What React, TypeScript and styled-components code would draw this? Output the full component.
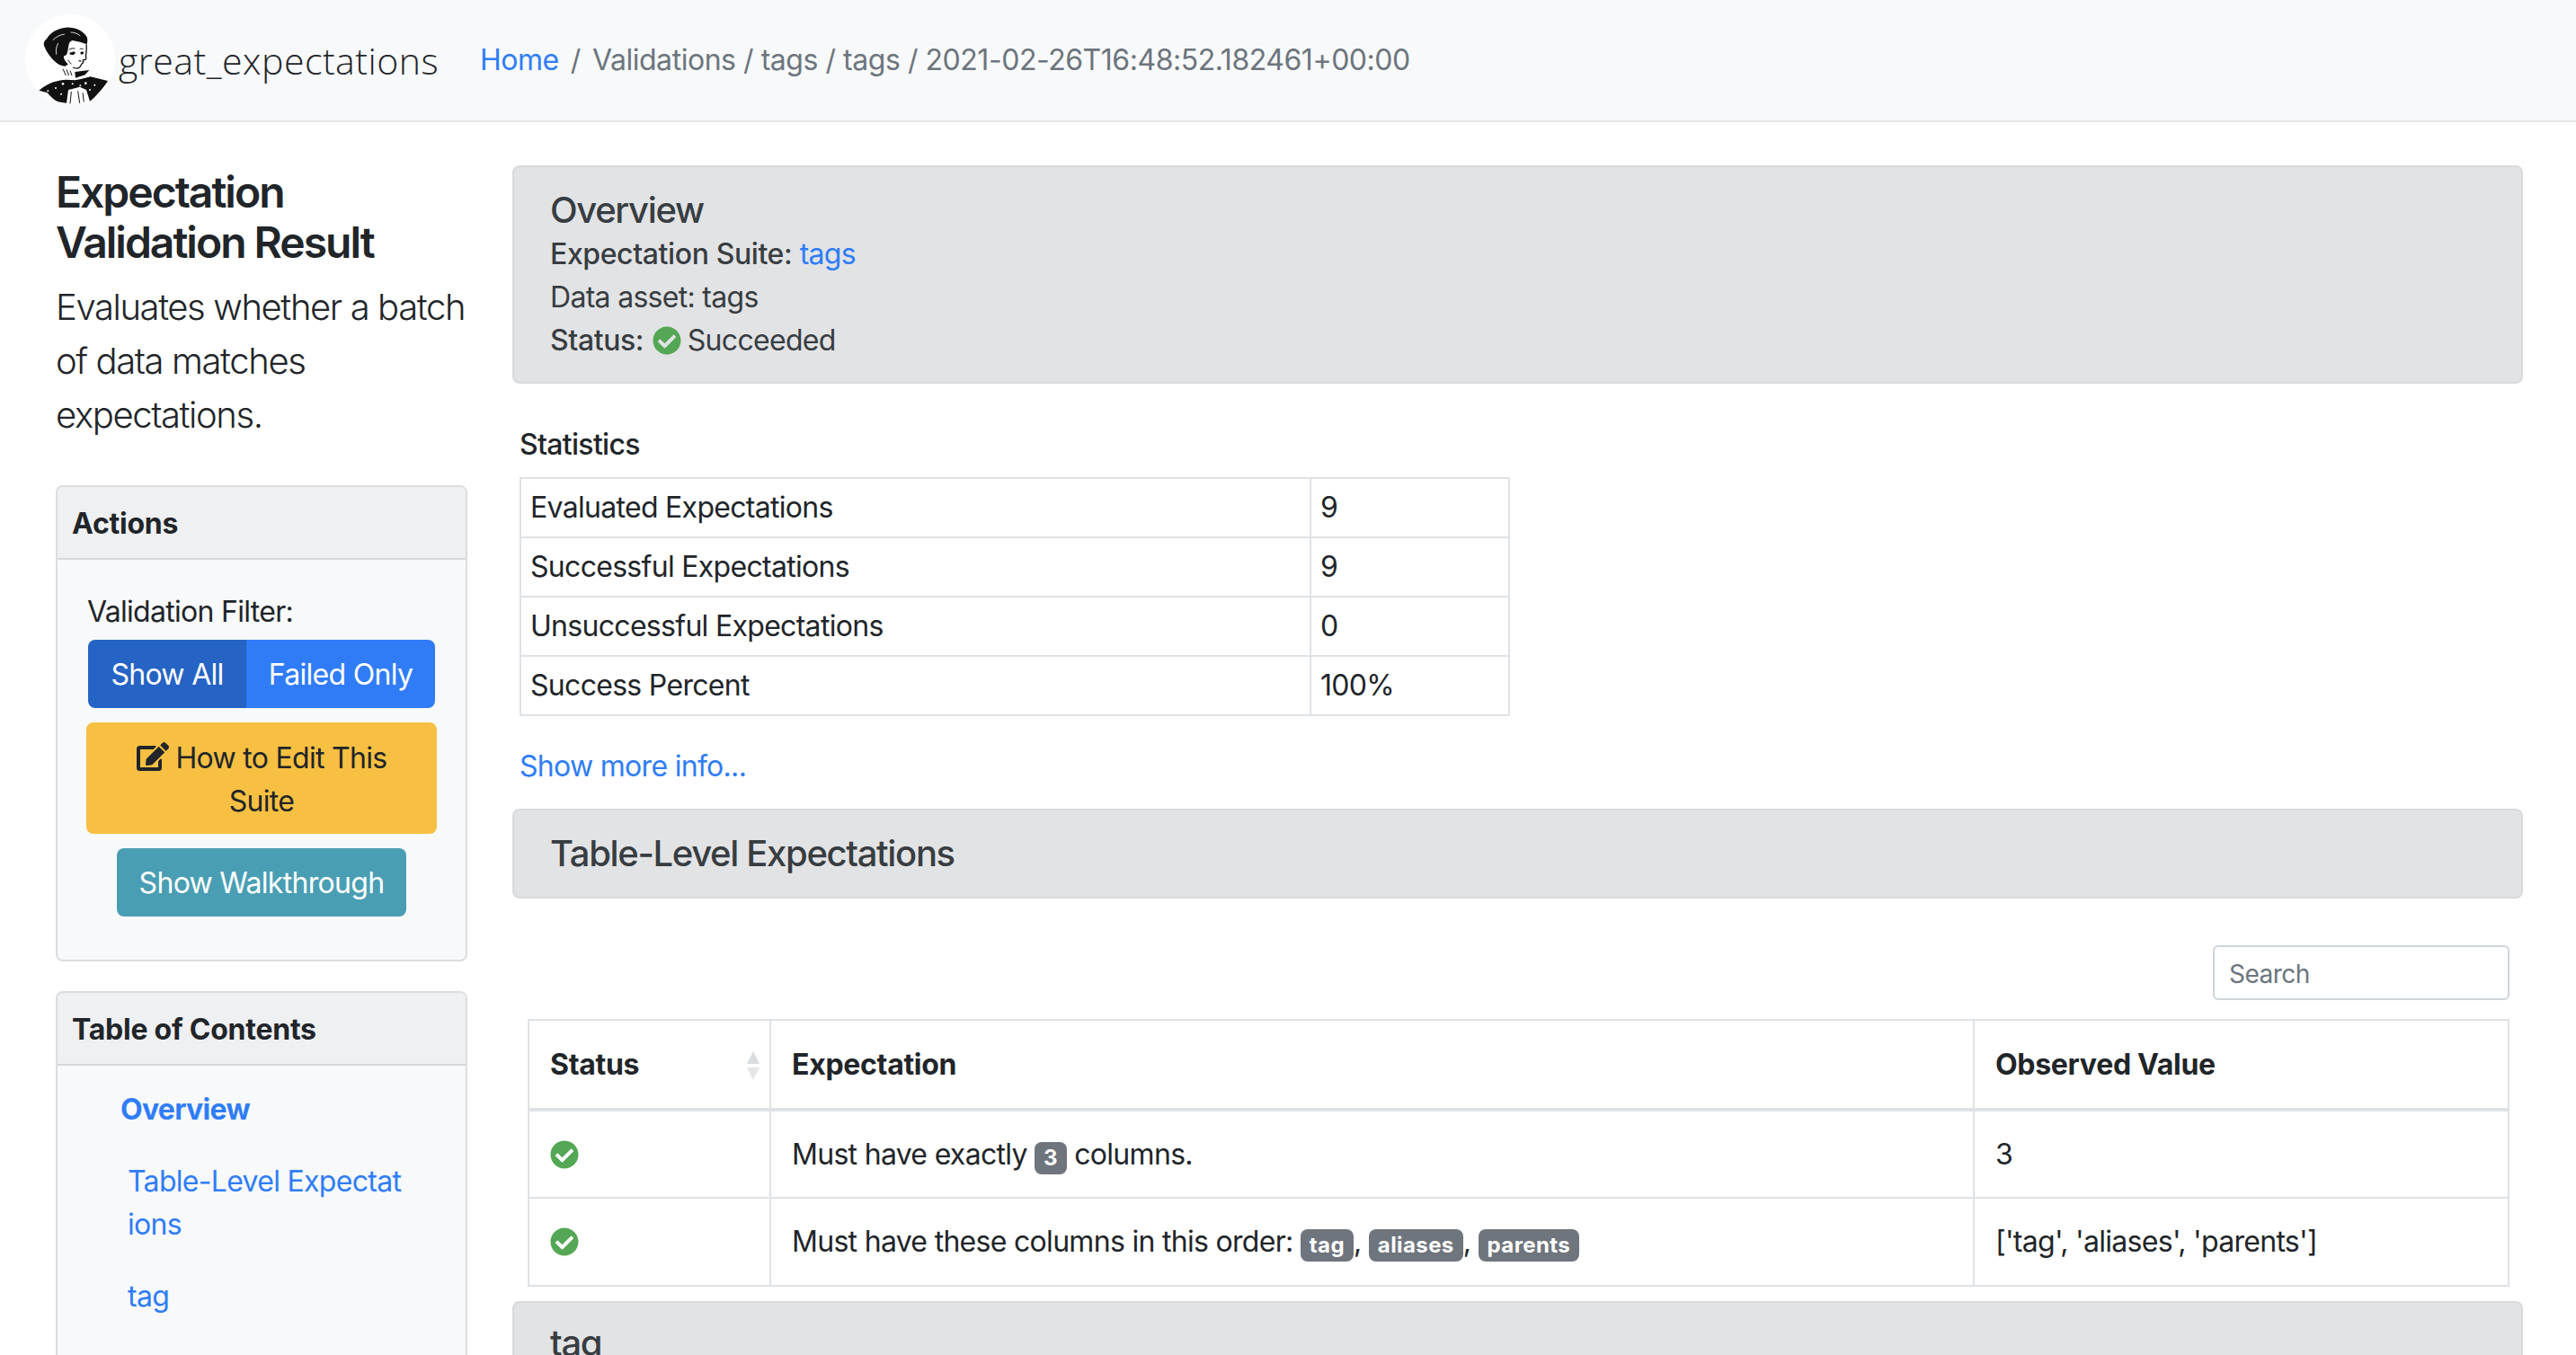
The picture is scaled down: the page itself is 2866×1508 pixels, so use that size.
import React from "react";
import styled, { createGlobalStyle } from "styled-components";
import { FaCheckCircle, FaEdit } from "react-icons/fa";

const Global = createGlobalStyle`
  html, body { margin: 0; padding: 0; background: #fff; overflow: hidden; }
  body { font-family: Inter, "Liberation Sans", sans-serif; font-size: 32px; line-height: 48px; color: #212529; letter-spacing: -0.7px; }
  * { box-sizing: border-box; }
`;

const Page = styled.div`height: 1508px; overflow: hidden; display: flex; flex-direction: column;`;
const Navbar = styled.header`
  height: 136px; flex: none; display: flex; align-items: center; background: #f8f9fa;
  border-bottom: 2px solid #e3e5e8; padding: 0 0 2px 28px;
`;
const Logo = styled.svg`width: 100px; height: 100px; flex: none;`;
const Brand = styled.span`
  font-family: "Open Sans", sans-serif; font-weight: 300; font-size: 41px; color: #212529;
  letter-spacing: 0.5px; margin-left: 4px; width: 402px; flex: none; position: relative; top: 1px;
`;
const Crumbs = styled.nav`display: flex; color: #6c757d; gap: 13px; margin-top: 2px; letter-spacing: -0.46px;`;
const Link = styled.a<{ $bold?: boolean }>`color: #2f7df6; text-decoration: none; font-weight: ${p => (p.$bold ? 700 : 400)};`;

const Body = styled.div`flex: 1; display: flex; min-height: 0; padding-left: 62px;`;
const Side = styled.aside`width: 458px; flex: none; padding-top: 50px;`;
const Title = styled.h1`font-size: 48px; line-height: 56px; font-weight: 600; margin: 0 0 14px; letter-spacing: -2px;`;
const Lead = styled.p`font-size: 40px; line-height: 60px; font-weight: 300; margin: 0 0 48px; letter-spacing: -1.4px;`;
const Card = styled.section`
  border: 2px solid #dcddde; border-radius: 8px; background: #f8f9fa; margin-bottom: 33px; overflow: hidden;
`;
const CardHead = styled.h2`
  margin: 0; height: 81px; padding: 17px 16px; background: #eff0f2; border-bottom: 2px solid #d6d8db;
  font-size: 32px; line-height: 48px; font-weight: 700; letter-spacing: -0.25px;
`;
const ActionsBody = styled.div`
  display: flex; flex-direction: column; align-items: center; padding: 34px 32px 48px;
`;
const FilterLabel = styled.div`align-self: flex-start; margin-bottom: 7px; margin-left: 1px;`;
const Group = styled.div`display: flex; width: 386px; height: 76px; border-radius: 8px; overflow: hidden; margin-bottom: 16px;`;
const GroupBtn = styled.button<{ $on?: boolean }>`
  border: 0; color: #fff; font: inherit; letter-spacing: inherit; padding: 2px 0 0; background: ${p => (p.$on ? "#2563c4" : "#307cf6")};
  flex: ${p => (p.$on ? "0 0 176px" : "1")};
`;
const EditBtn = styled.button`
  width: 390px; height: 124px; border: 0; border-radius: 8px; background: #f7c042; color: #212529;
  font: inherit; letter-spacing: inherit; margin-bottom: 16px; padding: 16px 24px 12px; line-height: 48px;
  svg { width: 36px; height: 32px; vertical-align: -3px; margin-right: 8px; }
`;
const WalkBtn = styled.button`
  width: 322px; height: 76px; border: 0; border-radius: 8px; background: #4a9eb3; color: #fff;
  font: inherit; letter-spacing: inherit; padding: 2px 0 0;
`;
const TocBody = styled.ul`list-style: none; margin: 0; padding: 25px 70px 40px 70px;`;
const TocItem = styled.li<{ $top?: boolean }>`
  margin: 0 0 32px ${p => (p.$top ? "0" : "8px")}; word-break: break-all;
`;

const Main = styled.main`width: 2237px; margin-left: 50px; padding-top: 48px; flex: none;`;
const Banner = styled.section`
  background: #e2e3e5; border: 2px solid #d9dadc; border-radius: 8px; color: #383d41; padding: 24px 40px 22px;
`;
const BannerTitle = styled.h3`font-size: 40px; line-height: 48px; font-weight: 500; margin: 0; letter-spacing: -1.35px;`;
const Meta = styled.div`&:first-of-type { margin-top: 1px; }`;
const Strong = styled.strong`font-weight: 500; letter-spacing: -0.4px;`;
const Check = styled(FaCheckCircle)`color: #54a754; width: 32px; height: 32px; vertical-align: -5px; flex: none;`;
const BannerCheck = styled(Check)`margin-left: 2px; margin-right: -2px;`;
const StatsBlock = styled.div`padding-left: 8px; margin-top: 44px;`;
const StatsTitle = styled.div`font-weight: 500; margin-bottom: 12px;`;
const StatsTable = styled.table`border-collapse: collapse; table-layout: fixed; width: 1102px;`;
const StatsCell = styled.td<{ $w?: number }>`
  border: 2px solid #dee2e6; height: 66px; padding: 0 10px; width: ${p => (p.$w ? p.$w + "px" : "auto")};
`;
const More = styled.div`margin: 32px 0 23px;`;
const SectionBar = styled(Banner)`padding: 24px 40px;`;
const SearchRow = styled.div`display: flex; justify-content: flex-end; margin: 52px 15px 21px 0;`;
const Search = styled.input`
  width: 330px; height: 61px; border: 2px solid #ced4da; border-radius: 6px; padding: 2px 16px 0;
  font: 28px Inter, sans-serif; letter-spacing: -0.5px; background: #fff;
  &::placeholder { color: #6c757d; opacity: 1; }
`;
const ResultTable = styled.table`
  border-collapse: collapse; table-layout: fixed; width: 2205px; margin-left: 17px; margin-bottom: 16px;
`;
const Th = styled.th<{ $w?: number }>`
  border: 2px solid #dee2e6; border-bottom-width: 4px; height: 100px; padding: 0 23px; text-align: left; font-weight: 700;
  position: relative; letter-spacing: -0.3px; width: ${p => (p.$w ? p.$w + "px" : "auto")};
`;
const Td = styled.td`border: 2px solid #dee2e6; height: 98px; padding: 0 23px;`;
const Sort = styled.svg`position: absolute; right: 9px; top: 34px; width: 18px; height: 32px;`;
const Badge = styled.span`
  display: inline-block; background: #6f757d; color: #fff; border-radius: 8px; font-size: 24px; line-height: 24px;
  font-weight: 700; padding: 6px 10px; vertical-align: -1px; letter-spacing: 0.4px;
`;
const TagBar = styled(Banner)`height: 200px; padding-top: 21px;`;

const Portrait = () => (
  <Logo viewBox="24 18 300 300" aria-label="logo">
    <circle cx="174" cy="168" r="150" fill="#fff" />
    {/* hair */}
    <path fill="#111" d="M96 100c8-18 34-36 64-38 28-2 58 10 70 32 3 7 2 16 0 24l-23-8-25-5c-8 2-12 8-13 18l-4 22c-2 8-6 12-12 12-2 10 6 18 14 28l-10 6c-14 0-26-8-34-16-14-12-28-32-34-48-5-10-3-20 7-27z" />
    <path fill="none" stroke="#fff" strokeWidth="2.5" d="M116 104c10-10 24-18 40-20M134 114c-6 12-8 24-6 38M176 78c12 0 24 4 32 12" />
    {/* face outline */}
    <path fill="none" stroke="#111" strokeWidth="4" d="M228 118c2 14 0 28-2 40 2 4 3 6 1 10l-10 3c2 6 0 10-4 12l-6 10c-4 6-14 6-24 2" />
    <path fill="#111" d="M172 146l16-4 4 6-8 6-10-2zM208 144l10-2 1 8-9 2zM212 176l-12-2 8-4z" />
    <path fill="none" stroke="#111" strokeWidth="3" d="M170 136c6-4 14-6 20-4M206 134c4-2 8-2 12 0M166 170l12 14" />
    {/* neck */}
    <path fill="none" stroke="#111" strokeWidth="3" d="M150 200l10 22M162 202l8 20M174 206l6 16" />
    <path fill="#111" d="M190 210l48-6-14 16-32 10z" />
    {/* jacket */}
    <path fill="#111" d="M70 272c14-12 32-22 48-28 14-4 30-8 44-8l28 2 20-4 32-8 58 14c-6 10-14 20-22 30l-24 26-14 12-12-38-22-10-22 6-16 4-6 44-28-4c-14-6-26-18-36-30z" />
    <g fill="#fff">
      <circle cx="150" cy="250" r="4" /><circle cx="182" cy="250" r="3" /><circle cx="226" cy="248" r="4" />
      <circle cx="256" cy="254" r="3" /><circle cx="126" cy="264" r="3" /><circle cx="100" cy="274" r="3" />
      <circle cx="208" cy="256" r="3" /><circle cx="240" cy="270" r="3" /><circle cx="144" cy="284" r="3" />
    </g>
    {/* shirt */}
    <path fill="none" stroke="#111" strokeWidth="3" d="M178 276l-4 40M200 274l6 40M216 280l4 30" />
  </Logo>
);

export default function App() {
  return (
    <>
      <Global />
      <Page>
        <Navbar>
          <Portrait />
          <Brand>great_expectations</Brand>
          <Crumbs>
            <Link>Home</Link>
            <span>/</span>
            <span>Validations / tags / tags / 2021-02-26T16:48:52.182461+00:00</span>
          </Crumbs>
        </Navbar>
        <Body>
          <Side>
            <Title>Expectation Validation Result</Title>
            <Lead>Evaluates whether a batch of data matches expectations.</Lead>
            <Card>
              <CardHead>Actions</CardHead>
              <ActionsBody>
                <FilterLabel>Validation Filter:</FilterLabel>
                <Group>
                  <GroupBtn $on>Show All</GroupBtn>
                  <GroupBtn>Failed Only</GroupBtn>
                </Group>
                <EditBtn><FaEdit />How to Edit This Suite</EditBtn>
                <WalkBtn>Show Walkthrough</WalkBtn>
              </ActionsBody>
            </Card>
            <Card>
              <CardHead>Table of Contents</CardHead>
              <TocBody>
                <TocItem $top><Link $bold>Overview</Link></TocItem>
                <TocItem><Link>Table-Level Expectations</Link></TocItem>
                <TocItem><Link>tag</Link></TocItem>
              </TocBody>
            </Card>
          </Side>
          <Main>
            <Banner>
              <BannerTitle>Overview</BannerTitle>
              <Meta><Strong>Expectation Suite:</Strong> <Link>tags</Link></Meta>
              <Meta>Data asset: tags</Meta>
              <Meta><Strong>Status:</Strong> <BannerCheck /> Succeeded</Meta>
            </Banner>
            <StatsBlock>
              <StatsTitle>Statistics</StatsTitle>
              <StatsTable>
                <tbody>
                  <tr><StatsCell $w={879}>Evaluated Expectations</StatsCell><StatsCell>9</StatsCell></tr>
                  <tr><StatsCell>Successful Expectations</StatsCell><StatsCell>9</StatsCell></tr>
                  <tr><StatsCell>Unsuccessful Expectations</StatsCell><StatsCell>0</StatsCell></tr>
                  <tr><StatsCell>Success Percent</StatsCell><StatsCell>100%</StatsCell></tr>
                </tbody>
              </StatsTable>
              <More><Link>Show more info...</Link></More>
            </StatsBlock>
            <SectionBar><BannerTitle>Table-Level Expectations</BannerTitle></SectionBar>
            <SearchRow><Search placeholder="Search" /></SearchRow>
            <ResultTable>
              <thead>
                <tr>
                  <Th $w={269}>Status
                    <Sort viewBox="0 0 18 32">
                      <path fill="#d9dcdf" d="M9 0l7 14H2z" />
                      <path fill="#e4e6e8" d="M9 32l7-14H2z" />
                    </Sort>
                  </Th>
                  <Th $w={1339}>Expectation</Th>
                  <Th>Observed Value</Th>
                </tr>
              </thead>
              <tbody>
                <tr>
                  <Td><Check /></Td>
                  <Td>Must have exactly <Badge>3</Badge> columns.</Td>
                  <Td>3</Td>
                </tr>
                <tr>
                  <Td><Check /></Td>
                  <Td>Must have these columns in this order: <Badge>tag</Badge>, <Badge>aliases</Badge>, <Badge>parents</Badge></Td>
                  <Td>['tag', 'aliases', 'parents']</Td>
                </tr>
              </tbody>
            </ResultTable>
            <TagBar><BannerTitle>tag</BannerTitle></TagBar>
          </Main>
        </Body>
      </Page>
    </>
  );
}
